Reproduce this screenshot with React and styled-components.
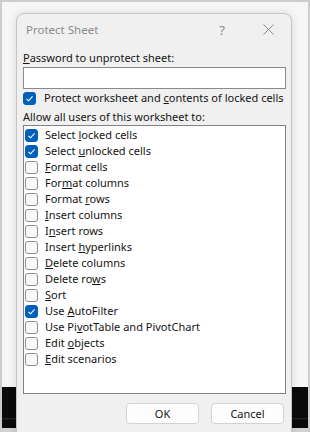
import styled, { createGlobalStyle } from "styled-components";

const GlobalStyle = createGlobalStyle`
  html, body {
    margin: 0;
    padding: 0;
  }
  body {
    font-family: "Noto Sans", "Liberation Sans", sans-serif;
    font-size: 11px;
    color: #141414;
  }
`;

const Screen = styled.div`
  box-sizing: border-box;
  width: 310px;
  height: 432px;
  overflow: hidden;
  border: 2px solid #cdcdcd;
  border-bottom: none;
  padding: 11px 0 0 14px;
  background: linear-gradient(
    to bottom,
    #f6f6f6 0,
    #f6f6f6 385px,
    #0b0b0b 385px,
    #0b0b0b 416px,
    #2a2a2a 416px,
    #0b0b0b 418px,
    #0b0b0b 426px,
    #d2d2d2 426px
  );
`;

const Dialog = styled.div`
  box-sizing: border-box;
  width: 276px;
  height: 430px;
  background: #f0f0f0;
  border: 1px solid #c5c5c5;
  border-radius: 8px 8px 0 0;
  box-shadow: 0 0 8px rgba(0, 0, 0, 0.12);
  display: flex;
  flex-direction: column;
`;

const TitleBar = styled.div`
  display: flex;
  align-items: center;
  height: 31px;
  padding-left: 9px;
  color: #8b8b8b;
`;

const Title = styled.div`
  flex: 1;
  font-size: 11.5px;
`;

const TitleButton = styled.div`
  width: 46px;
  display: flex;
  justify-content: center;
  align-items: center;
  color: #8b8b8b;
  font-size: 13px;
`;

const Body = styled.div`
  padding: 5px 5px 0 6px;
  display: flex;
  flex-direction: column;
`;

const Label = styled.div`
  height: 16px;
  line-height: 16px;
  margin-top: ${(p) => p.$mt || 0}px;
`;

const Input = styled.div`
  box-sizing: border-box;
  height: 22px;
  margin-top: 1px;
  background: #fff;
  border: 1px solid #8a8a8a;
`;

const Row = styled.div`
  display: flex;
  align-items: center;
  height: 16px;
  line-height: 16px;
  gap: ${(p) => p.$gap || 7}px;
  margin-top: ${(p) => p.$mt || 0}px;
  padding-left: ${(p) => p.$pl || 0}px;
  white-space: nowrap;
`;

const Box = styled.span`
  box-sizing: border-box;
  flex: none;
  width: 13px;
  height: 13px;
  border-radius: 3px;
  display: flex;
  align-items: center;
  justify-content: center;
  background: ${(p) => (p.$on ? "#005fb8" : "#f9f9f9")};
  border: 1px solid ${(p) => (p.$on ? "#005fb8" : "#8d8d8d")};
`;

const List = styled.div`
  box-sizing: border-box;
  height: 269px;
  background: #fff;
  border: 1px solid #828282;
  padding-top: 1px;
`;

const Buttons = styled.div`
  display: flex;
  justify-content: flex-end;
  gap: 12px;
  margin-top: 9px;
  padding-right: 2px;
`;

const Button = styled.div`
  box-sizing: border-box;
  width: 73px;
  height: 21px;
  display: flex;
  align-items: center;
  justify-content: center;
  background: #fdfdfd;
  border: 1px solid #d3d3d3;
  border-radius: 4px;
`;

const Check = () => (
  <svg width="9" height="9" viewBox="0 0 9 9">
    <polyline
      points="1.5,4.8 3.6,6.8 7.6,2.4"
      fill="none"
      stroke="#fff"
      strokeWidth="1.1"
    />
  </svg>
);

const Key = ({ text, idx }) => (
  <span>
    {text.slice(0, idx)}
    <u>{text[idx]}</u>
    {text.slice(idx + 1)}
  </span>
);

const items = [
  ["Select locked cells", 7, true],
  ["Select unlocked cells", 7, true],
  ["Format cells", 0],
  ["Format columns", 3],
  ["Format rows", 7],
  ["Insert columns", 0],
  ["Insert rows", 1],
  ["Insert hyperlinks", 7],
  ["Delete columns", 0],
  ["Delete rows", 9],
  ["Sort", 0],
  ["Use AutoFilter", 4, true],
  ["Use PivotTable and PivotChart", 6],
  ["Edit objects", 5],
  ["Edit scenarios", 0],
];

export default function App() {
  return (
    <>
      <GlobalStyle />
      <Screen>
        <Dialog>
          <TitleBar>
            <Title>Protect Sheet</Title>
            <TitleButton>?</TitleButton>
            <TitleButton>
              <svg width="11" height="11" viewBox="0 0 11 11">
                <path d="M0.5 0.5L10.5 10.5M10.5 0.5L0.5 10.5" stroke="#8b8b8b" strokeWidth="1" />
              </svg>
            </TitleButton>
          </TitleBar>
          <Body>
            <Label>
              <Key text="Password to unprotect sheet:" idx={0} />
            </Label>
            <Input />
            <Row $mt={1} $gap={8}>
              <Box $on>
                <Check />
              </Box>
              <Key text="Protect worksheet and contents of locked cells" idx={22} />
            </Row>
            <Label $mt={3}>Allow all users of this worksheet to:</Label>
            <List>
              {items.map(([t, i, on]) => (
                <Row key={t} $pl={1} $gap={7}>
                  <Box $on={on}>{on && <Check />}</Box>
                  <Key text={t} idx={i} />
                </Row>
              ))}
            </List>
            <Buttons>
              <Button>OK</Button>
              <Button>Cancel</Button>
            </Buttons>
          </Body>
        </Dialog>
      </Screen>
    </>
  );
}
